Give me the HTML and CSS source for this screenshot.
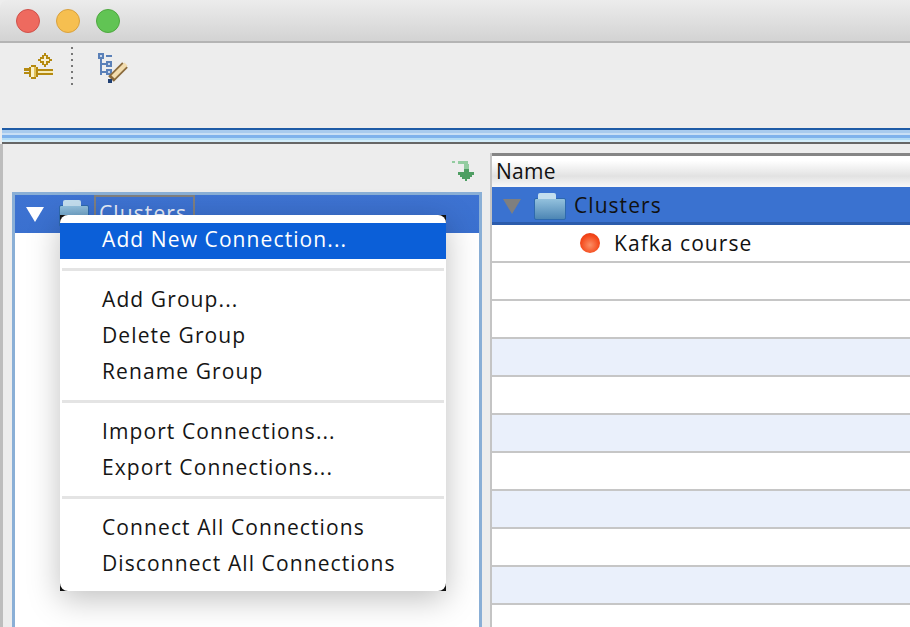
FILE: index.html
```html
<!DOCTYPE html>
<html lang="en">
<head>
    <meta charset="UTF-8">
    <title>Kafka Tool</title>
    <link rel="stylesheet" href="styles.css">
</head>
<body>
    <div class="window">

        <!-- Title bar -->
        <div class="titlebar">
            <span class="light red"></span>
            <span class="light yellow"></span>
            <span class="light green"></span>
        </div>

        <!-- Toolbar -->
        <div class="toolbar">
            <svg class="tool-icon" width="29" height="27" viewBox="0 0 29 27" shape-rendering="crispEdges">
                <path fill="#b58a10" d="M20 0h2v2h2v2h2v2h2v2h-2v2h-2v2h-2v2h-2v-2h-2v-2h-2V8h-2V6h2V4h2V2h2z"/>
                <path fill="#f8f0d0" d="M20 3h2v3h3v2h-3v3h-2V8h-3V6h3z"/>
                <path fill="#b58a10" d="M0 15h5v-1h2v-2h5v2h2v2h15v6H14v2h-2v2H7v-2H5v-3H0v-2h5v-1H0z"/>
                <path fill="#fbf3cc" d="M7 14h3v10H7z"/>
                <path fill="#e2c25a" d="M10 14h2v10h-2z"/>
                <path fill="#f6ebb8" d="M14 18h15v2H14z"/>
            </svg>
            <span class="tool-sep"></span>
            <svg class="tool-icon" width="30" height="30" viewBox="0 0 30 30">
                <g shape-rendering="crispEdges">
                    <path fill="#5a80b8" d="M0 0h6v6H0zM8 2h6v2H8zM2 6h2v16H2zM4 10h4v2H4zM4 18h4v2H4zM8 8h6v6H8zM8 16h6v6H8z"/>
                    <path fill="#c9d6ea" d="M2 2h2v2H2zM10 10h2v2h-2zM10 18h2v2h-2z"/>
                </g>
                <path d="M27 12 L13 26" stroke="#8a6a3c" stroke-width="8" fill="none"/>
                <path d="M28 11 L15 24" stroke="#f2dcae" stroke-width="4.5" fill="none"/>
                <path fill="#1f3f73" shape-rendering="crispEdges" d="M10 26h4v4h-4z"/>
            </svg>
        </div>

        <div class="strip"></div>

        <div class="main">
            <!-- Left side: connection tree -->
            <div class="left-pane">
                <div class="tree">
                    <div class="tree-row">
                        <span class="arrow-white"></span>
                        <span class="folder"></span>
                        <span class="tree-label">Clusters</span>
                    </div>
                </div>
            </div>

            <!-- Right side: table -->
            <div class="right-wrap">
                <svg class="down-icon" width="22" height="20" viewBox="0 0 22 20" shape-rendering="crispEdges">
                    <path fill="#93cca0" d="M0 0h3v2H0zM6 0h10v3H6zM12 3h5v5h-5z"/>
                    <path fill="#4f9e63" d="M12 8h5v3h5v3h-2v2h-2v2h-3v2h-2v-2H10v-2H8v-2H6v-3h6z"/>
                </svg>
                <div class="table">
                    <div class="table-head">Name</div>
                    <div class="row row-selected">
                        <span class="arrow-grey"></span>
                        <span class="folder"></span>
                        <span class="row-label">Clusters</span>
                    </div>
                    <div class="row row-child">
                        <span class="ball"></span>
                        <span class="row-label">Kafka course</span>
                    </div>
                    <div class="row"></div>
                    <div class="row"></div>
                    <div class="row row-alt"></div>
                    <div class="row"></div>
                    <div class="row row-alt"></div>
                    <div class="row"></div>
                    <div class="row row-alt"></div>
                    <div class="row"></div>
                    <div class="row row-alt"></div>
                    <div class="row"></div>
                </div>
            </div>
        </div>

        <!-- Context menu -->
        <div class="menu">
            <div class="menu-body">
                <div class="menu-item active">Add New Connection...</div>
                <div class="menu-sep"></div>
                <div class="menu-item">Add Group...</div>
                <div class="menu-item">Delete Group</div>
                <div class="menu-item">Rename Group</div>
                <div class="menu-sep"></div>
                <div class="menu-item">Import Connections...</div>
                <div class="menu-item">Export Connections...</div>
                <div class="menu-sep"></div>
                <div class="menu-item">Connect All Connections</div>
                <div class="menu-item">Disconnect All Connections</div>
            </div>
        </div>
    </div>
</body>
</html>
```

FILE: styles.css
```css
* {
    box-sizing: border-box;
    margin: 0;
    padding: 0;
}

html, body {
    height: 100%;
    overflow: hidden;
}

body {
    font-family: "Open Sans", "Noto Sans", sans-serif;
    background: #ededed;
    color: #111;
}

.window {
    position: relative;
    width: 910px;
    height: 627px;
    overflow: hidden;
    display: flex;
    flex-direction: column;
}

.titlebar {
    height: 43px;
    flex: none;
    display: flex;
    gap: 16px;
    padding: 9px 0 0 16px;
    background: linear-gradient(#ececec, #d3d3d3);
    border-bottom: 2px solid #b4b4b4;
    border-top-left-radius: 8px;
}

.light {
    width: 24px;
    height: 24px;
    border-radius: 50%;
}

.red {
    background: #ee6a5f;
    border: 1px solid #d0514a;
}

.yellow {
    background: #f6bf50;
    border: 1px solid #d9a13e;
}

.green {
    background: #61c454;
    border: 1px solid #4ea83f;
}

.toolbar {
    height: 85px;
    flex: none;
    display: flex;
    align-items: flex-start;
    background: #ededed;
    padding: 10px 0 0 24px;
}

.tool-icon {
    flex: none;
}

.tool-sep {
    width: 2px;
    height: 39px;
    margin: -6px 25px 0 18px;
    background: repeating-linear-gradient(#777 0 2px, transparent 2px 6px);
}

.strip {
    height: 16px;
    flex: none;
    margin-left: 2px;
    border-top: 2px solid #1e5ba6;
    border-bottom: 2px solid #666;
    background: linear-gradient(#a9cbee 0 3px, #c9dff5 3px 5px, #7fb2ec 5px 8px, #b4dcf6 8px 10px, #d3edfa 10px);
}

.main {
    flex: 1;
    display: flex;
    min-height: 0;
    border-left: 3px solid #bdbdbd;
}

.left-pane {
    width: 487px;
    flex: none;
    padding: 48px 8px 0 9px;
}

.tree {
    height: 440px;
    border: 3px solid #8aafd6;
    background: #fff;
}

.tree-row {
    height: 38px;
    display: flex;
    align-items: center;
    background: linear-gradient(#3e73d2, #3a70cf);
    padding-left: 11px;
}

.arrow-white {
    width: 0;
    height: 0;
    border-left: 9px solid transparent;
    border-right: 9px solid transparent;
    border-top: 15px solid #fff;
    margin-right: 15px;
}

.arrow-grey {
    width: 0;
    height: 0;
    margin-top: 4px;
    border-left: 9px solid transparent;
    border-right: 9px solid transparent;
    border-top: 15px solid #7f7f7f;
    margin-right: 14px;
}

.folder {
    position: relative;
    width: 30px;
    height: 22px;
    flex: none;
    margin-top: 4px;
    border: 1px solid #2d69ae;
    border-radius: 2px;
    background: linear-gradient(#93c1dd, #4d86b4);
}

.folder::before {
    content: "";
    position: absolute;
    top: -6px;
    left: 3px;
    width: 18px;
    height: 6px;
    background: #c3deee;
    border-radius: 2px 2px 0 0;
}

.tree-label {
    width: 101px;
    height: 38px;
    margin-left: 5px;
    padding: 2px 0 0 3px;
    border: 2px solid #7f7f7f;
    border-bottom: 0;
    font-size: 21px;
    letter-spacing: 1.1px;
    color: #e8eefa;
    line-height: 28px;
}

.right-wrap {
    position: relative;
    flex: 1;
    min-width: 0;
}

.down-icon {
    position: absolute;
    top: 17px;
    left: -38px;
}

.table {
    border-left: 2px solid #c4c4c4;
    margin-top: 9px;
}

.table-head {
    height: 34px;
    border-top: 3px solid #858585;
    padding-left: 4px;
    font-size: 21px;
    letter-spacing: 0.3px;
    line-height: 30px;
    background: linear-gradient(#fff 0, #fff 15%, #e2e2e2 65%, #f8f8f8 100%);
}

.row {
    height: 38px;
    border-bottom: 2px solid #c6c6c6;
    display: flex;
    align-items: center;
    font-size: 21px;
    background: #fff;
}

.row-alt {
    background: #eaf0fb;
}

.row-selected {
    background: #3a72d0;
    border-bottom: 3px solid #2c5cac;
    padding-left: 11px;
}

.row-selected .folder {
    width: 32px;
    margin-top: 8px;
    margin-right: 8px;
    margin-left: -1px;
}

.row-child {
    padding-left: 88px;
}

.ball {
    width: 20px;
    height: 20px;
    border-radius: 50%;
    margin-right: 14px;
    background: radial-gradient(circle at 50% 60%, #fb8f66 0, #f4481a 60%, #d92d0e 100%);
}

.row-label {
    letter-spacing: 1.05px;
}

.menu {
    position: absolute;
    top: 215px;
    left: 60px;
    width: 386px;
    height: 376px;
    background: #111;
    box-shadow: 0 8px 30px rgba(0, 0, 0, 0.25);
}

.menu-body {
    height: 100%;
    padding-top: 8px;
    background: #fff;
    border-radius: 8px;
}

.menu-item {
    height: 36px;
    padding-left: 42px;
    font-size: 21px;
    line-height: 33px;
    letter-spacing: 1.1px;
    color: #151515;
}

.menu-item.active {
    background: #0b5fd8;
    color: #fff;
}

.menu-sep {
    height: 3px;
    margin: 9px 2px 12px;
    background: #e4e4e4;
}
```
